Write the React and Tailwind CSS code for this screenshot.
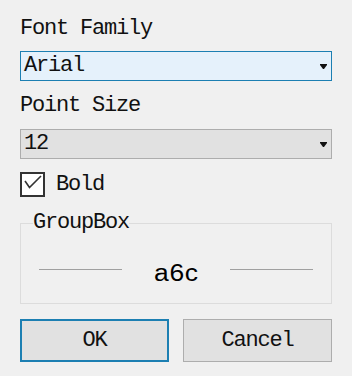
import { useState } from "react";

const mono = "font-['Liberation_Mono',monospace] text-[22px] tracking-[-1.2px] text-[#111]";

function Arrow() {
  return (
    <svg width="7" height="5" viewBox="0 0 7 5" className="shrink-0">
      <polygon points="0,0 7,0 7,1 4,5 3,5 0,1" fill="#111" />
    </svg>
  );
}

function Combo({ value, focused }) {
  return (
    <div
      className={
        "flex h-[30px] items-center justify-between pl-[3px] pr-[4px] " +
        (focused
          ? "border border-[#1c7fb2] bg-[#e5f1fb]"
          : "border border-[#adadad] bg-[#e1e1e1]")
      }
    >
      <span className={mono + " leading-[24px]"}>{value}</span>
      <Arrow />
    </div>
  );
}

export default function App() {
  const [bold, setBold] = useState(true);

  return (
    <div className="h-[376px] w-[352px] bg-[#f0f0f0] px-5 pt-[19px]">
      <div className={mono + " h-5 leading-5"}>Font Family</div>
      <div className="mt-3">
        <Combo value="Arial" focused />
      </div>

      <div className={mono + " mt-[15px] h-5 leading-5"}>Point Size</div>
      <div className="mt-[13px]">
        <Combo value="12" />
      </div>

      <div
        className="mt-[13px] flex h-[25px] cursor-default items-center gap-[11px]"
        onClick={() => setBold(!bold)}
      >
        <div className="flex h-[25px] w-[25px] items-center justify-center border-2 border-[#333] bg-white">
          {bold && (
            <svg width="21" height="21" viewBox="0 0 21 21">
              <polyline
                points="3,7 7.5,13.5 19,2"
                fill="none"
                stroke="#333"
                strokeWidth="1.6"
              />
            </svg>
          )}
        </div>
        <span className={mono + " leading-6"}>Bold</span>
      </div>

      <div className="relative mt-[26px] h-[81px] border border-[#dcdcdc] px-[18px] pt-[37px]">
        <span
          className={
            mono + " absolute -top-[11px] left-[12px] h-5 bg-[#f0f0f0] leading-5"
          }
        >
          GroupBox
        </span>
        <div className="flex h-6 items-start justify-between">
          <div className="mt-2 h-px w-[83px] bg-[#a0a0a0]" />
          <span className="inline-block scale-x-[1.15] font-['Liberation_Sans',Arial,sans-serif] text-[23px] leading-6 tracking-[0.5px] text-black">
            a6c
          </span>
          <div className="mt-2 h-px w-[83px] bg-[#a0a0a0]" />
        </div>
      </div>

      <div className="mt-[15px] grid grid-cols-2 gap-[14px]">
        <button className={mono + " h-[43px] border-2 border-[#1c7fb2] bg-[#e1e1e1] leading-6"}>
          OK
        </button>
        <button className={mono + " h-[43px] border border-[#adadad] bg-[#e1e1e1] leading-6"}>
          Cancel
        </button>
      </div>
    </div>
  );
}
